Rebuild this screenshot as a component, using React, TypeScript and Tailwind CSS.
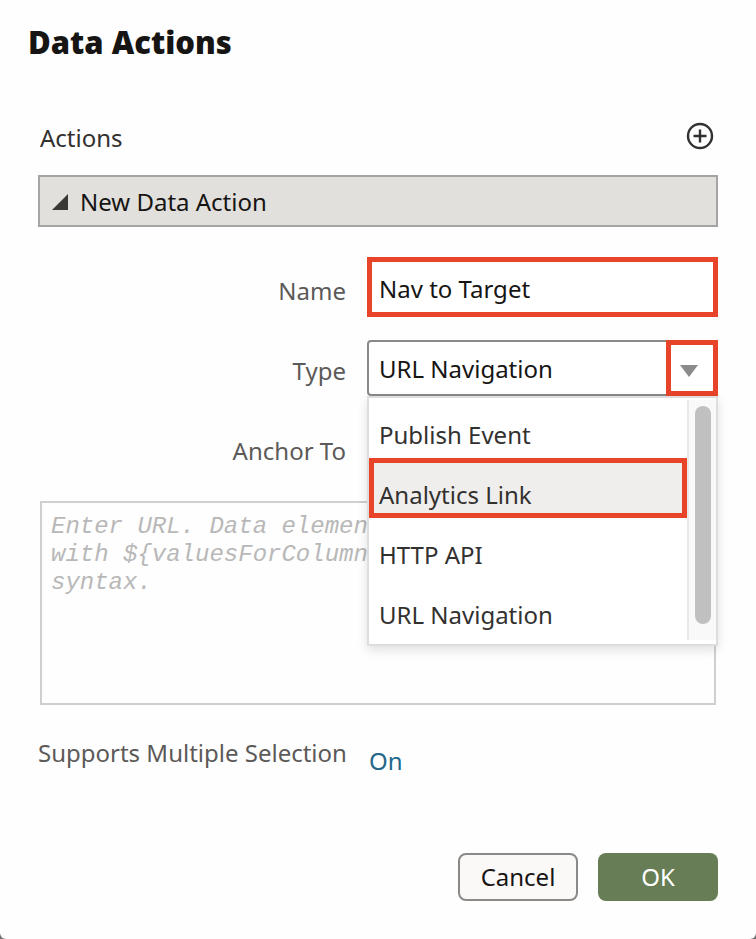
import { useState } from "react";

const actionTypes = ["Publish Event", "Analytics Link", "HTTP API", "URL Navigation"];

const placeholder = "Enter URL. Data elements\nwith ${valuesForColumn\nsyntax.";

function AddIcon() {
  return (
    <svg viewBox="0 0 28 28" className="size-7" fill="none" stroke="#33312f" aria-hidden="true">
      <circle cx="14" cy="14" r="12" strokeWidth="2.4" />
      <path d="M14 7.5v13M7.5 14h13" strokeWidth="2.4" />
    </svg>
  );
}

function TypeMenu({ onPick }: { onPick: (type: string) => void }) {
  return (
    <div className="absolute inset-x-0 top-full z-10 flex border-2 border-[#dedede] bg-white pb-1 shadow-[0_4px_10px_rgba(0,0,0,0.12)]">
      <ul className="min-w-0 flex-1 pb-0.5">
        {actionTypes.map((type) => (
          <li key={type}>
            <button
              type="button"
              onClick={() => onPick(type)}
              className={
                type === "Analytics Link"
                  ? "flex h-15 w-full items-end border-5 border-[#e8442a] bg-[#efeeed] px-[5px] pb-0.5 text-left leading-8"
                  : "flex h-15 w-full items-end px-2.5 pb-[7px] text-left leading-8"
              }
            >
              {type}
            </button>
          </li>
        ))}
      </ul>
      <div className="mt-0.5 flex w-[29px] border-l-2 border-[#e8e8e8] bg-[#f9f9f9] pt-1.5 pb-4 pl-1.5">
        <div className="w-4 rounded-full bg-[#c0c0c0]" />
      </div>
    </div>
  );
}

export default function App() {
  const [name, setName] = useState("Nav to Target");
  const [type, setType] = useState("URL Navigation");
  const [open, setOpen] = useState(true);
  const [multiple, setMultiple] = useState(true);

  return (
    <div className="min-h-screen bg-[#6f6f6f] font-['Noto_Sans','Open_Sans',sans-serif] text-[24px] leading-8 text-[#33312f]">
      <main className="min-h-screen rounded-b-md bg-[#fefefe] px-[38px] pb-[38px]">
        <h1 className="-ml-2.5 pt-[22px] text-[31px] leading-10 font-black text-[#161513]">Data Actions</h1>

        <div className="mt-[58px] flex h-8 items-center justify-between pr-1 pl-0.5">
          <h2 className="pt-1">Actions</h2>
          <button type="button" aria-label="Add action">
            <AddIcon />
          </button>
        </div>

        <button
          type="button"
          className="mt-[23px] flex h-[52px] w-full items-center gap-3 border-2 border-[#a5a4a2] bg-[#e2e0dd] pt-0.5 pl-3 text-[#161513]"
        >
          <svg viewBox="0 0 16 16" className="size-4" fill="#3a3835" aria-hidden="true">
            <path d="M16 0v16H0z" />
          </svg>
          New Data Action
        </button>

        <div className="mt-[30px] grid grid-cols-[308px_1fr] items-center gap-x-[21px] text-[#5c5a58]">
          <label htmlFor="name" className="pt-2 text-right">
            Name
          </label>
          <input
            id="name"
            value={name}
            onChange={(e) => setName(e.target.value)}
            className="h-15 w-full min-w-0 border-5 border-[#e8442a] bg-white px-[7px] pt-0.5 text-[#161513] outline-none"
          />

          <label htmlFor="type" className="mt-[23px] pt-1.5 text-right">
            Type
          </label>
          <div className="relative mt-[23px] text-[#33312f]">
            <select
              id="type"
              value={type}
              onChange={(e) => setType(e.target.value)}
              className="h-14 w-full appearance-none rounded border-2 border-[#8b8987] bg-white px-2.5 pt-0.5 text-[#161513] outline-none"
            >
              {actionTypes.map((t) => (
                <option key={t}>{t}</option>
              ))}
            </select>
            <button
              type="button"
              aria-label="Show types"
              onClick={() => setOpen(!open)}
              className="absolute inset-y-0 right-0 flex w-13 items-center justify-center border-5 border-[#e8442a] bg-white pt-1.5 pr-1.5"
            >
              <svg viewBox="0 0 18 12" className="h-3 w-[18px]" fill="#8b8b8b" aria-hidden="true">
                <path d="M0 0h18L9 12z" />
              </svg>
            </button>
            {open && (
              <TypeMenu
                onPick={(t) => {
                  setType(t);
                  setOpen(false);
                }}
              />
            )}
          </div>

          <div className="mt-[39px] text-right">Anchor To</div>
        </div>

        <textarea
          aria-label="URL"
          placeholder={placeholder}
          className="mx-0.5 mt-[34px] block h-51 w-[calc(100%-4px)] resize-none border-2 border-[#cfcfcf] bg-[#fefefe] px-[9px] py-2.5 font-['Liberation_Mono',monospace] leading-7 outline-none placeholder:text-[#b8b8b8] placeholder:italic"
        />

        <div className="mt-8 grid grid-cols-[308px_1fr] gap-x-[23px]">
          <div id="multiple" className="text-right whitespace-nowrap text-[#5c5a58]">
            Supports Multiple Selection
          </div>
          <button
            type="button"
            aria-labelledby="multiple"
            onClick={() => setMultiple(!multiple)}
            className="mt-2 justify-self-start text-[#25678a]"
          >
            {multiple ? "On" : "Off"}
          </button>
        </div>

        <div className="mt-[76px] flex justify-end gap-5">
          <button type="button" className="h-12 w-30 rounded-lg border-2 border-[#8b8987] bg-[#fbf9f8] text-[#161513]">
            Cancel
          </button>
          <button type="button" className="h-12 w-30 rounded-lg bg-[#677d55] text-white">
            OK
          </button>
        </div>
      </main>
    </div>
  );
}
